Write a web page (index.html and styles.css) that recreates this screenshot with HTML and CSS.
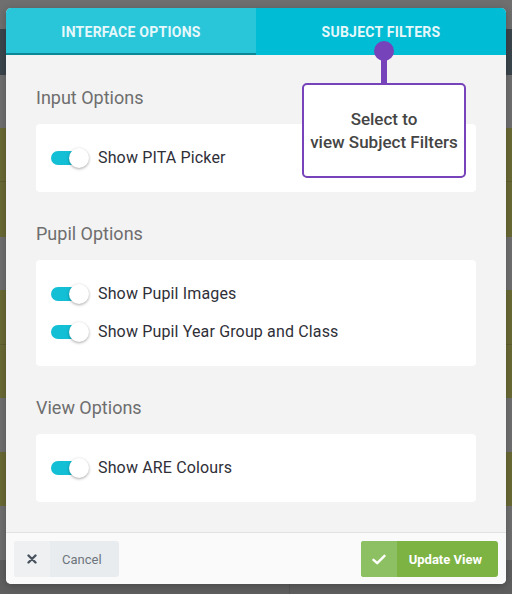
FILE: index.html
```html
<!DOCTYPE html>
<html>
<head>
<meta charset="utf-8">
<link rel="stylesheet" href="styles.css">
</head>
<body>
<div class="page">
  <div class="band b-gray" style="height:29px"></div>
  <div class="band b-slate" style="height:46px"></div>
  <div class="band b-gray" style="height:53px"></div>
  <div class="band b-olive line" style="height:54px"></div>
  <div class="band b-olive" style="height:55px"></div>
  <div class="band b-gray" style="height:53px"></div>
  <div class="band b-olive line" style="height:55px"></div>
  <div class="band b-olive" style="height:53px"></div>
  <div class="band b-gray" style="height:54px"></div>
  <div class="band b-olive" style="height:54px"></div>
  <div class="band b-gray" style="height:54px"></div>
  <div class="band b-dark"><span class="divider"></span></div>
</div>

<div class="modal">
  <div class="tabs">
    <div class="tab active">INTERFACE OPTIONS</div>
    <div class="tab">SUBJECT FILTERS</div>
  </div>
  <div class="body">
    <h3 class="heading">Input Options</h3>
    <div class="card">
      <div class="row"><span class="switch"><span class="track"></span><span class="thumb"></span></span>Show PITA Picker</div>
    </div>
    <h3 class="heading">Pupil Options</h3>
    <div class="card">
      <div class="row"><span class="switch"><span class="track"></span><span class="thumb"></span></span>Show Pupil Images</div>
      <div class="row"><span class="switch"><span class="track"></span><span class="thumb"></span></span>Show Pupil Year Group and Class</div>
    </div>
    <h3 class="heading">View Options</h3>
    <div class="card">
      <div class="row"><span class="switch"><span class="track"></span><span class="thumb"></span></span>Show ARE Colours</div>
    </div>
  </div>
  <div class="footer">
    <button class="btn cancel"><span class="ico"><svg width="10" height="10" viewBox="0 0 10 10"><path d="M1.5 1.5 L8.5 8.5 M8.5 1.5 L1.5 8.5" stroke="#4a5560" stroke-width="2.4" stroke-linecap="round"/></svg></span><span class="lbl">Cancel</span></button>
    <button class="btn update"><span class="ico"><svg width="14" height="11" viewBox="0 0 14 11"><path d="M1.5 5.8 L5.2 9.2 L12.5 1.8" fill="none" stroke="#fff" stroke-width="2.4" stroke-linecap="round" stroke-linejoin="round"/></svg></span><span class="lbl">Update View</span></button>
  </div>

  <div class="pin"></div>
  <div class="stem"></div>
  <div class="callout">Select to<br>view Subject Filters</div>
</div>
</body>
</html>
```

FILE: styles.css
```css
* { box-sizing: border-box; }
html, body { margin: 0; padding: 0; }
body {
  width: 512px;
  height: 594px;
  overflow: hidden;
  position: relative;
  font-family: Roboto, "Liberation Sans", sans-serif;
  background: #606060;
}
.page { display: flex; flex-direction: column; height: 594px; }
.band { width: 100%; flex: none; position: relative; }
.b-gray { background: #6f6f6f; }
.b-slate { background: #3b454c; }
.b-olive { background: #6a6a35; }
.b-dark { background: #5f5f5f; flex: 1; }
.line { border-bottom: 1px solid #5e5e30; }
.divider { position: absolute; left: 289px; top: 0; bottom: 0; width: 1px; background: #555; }

.modal {
  position: absolute;
  left: 6px;
  top: 8px;
  width: 500px;
  height: 576px;
  background: #f3f3f3;
  border-radius: 5px;
  overflow: hidden;
  display: flex;
  flex-direction: column;
  box-shadow: 0 2px 8px rgba(0,0,0,0.25);
}
.tabs { display: flex; height: 47px; flex: none; }
.tab {
  flex: 1;
  display: flex;
  align-items: center;
  justify-content: center;
  background: #00bcd4;
  color: #e6f8fb;
  font-size: 14px;
  font-weight: 700;
  letter-spacing: 0.25px;
  padding-top: 1px;
}
.tab.active { background: #29c6d9; border-bottom: 2px solid #0b8796; padding-top: 2px; }

.body { flex: 1; padding: 31px 30px 30px; display: flex; flex-direction: column; }
.heading {
  margin: 0 0 14px;
  font-size: 18px;
  font-weight: 400;
  line-height: 24px;
  color: #6e6e6e;
}
.card {
  background: #fff;
  border-radius: 4px;
  padding: 15px 15px;
  margin-bottom: 30px;
}
.card:last-child { margin-bottom: 0; }
.row {
  height: 38px;
  display: flex;
  align-items: center;
  font-size: 16px;
  letter-spacing: 0.15px;
  color: #2f2f38;
  padding-bottom: 1px;
}
.switch { position: relative; width: 38px; height: 20px; margin-right: 9px; flex: none; }
.track { position: absolute; left: 0; top: 3px; width: 34px; height: 14px; border-radius: 7px; background: #13bfd5; }
.thumb {
  position: absolute; left: 18px; top: 0; width: 20px; height: 20px; border-radius: 50%;
  background: #fff; box-shadow: 0 1px 3px rgba(0,0,0,0.35);
}

.footer {
  flex: none;
  height: 52px;
  border-top: 1px solid #e2e2e2;
  background: #fafafa;
  display: flex;
  justify-content: space-between;
  padding: 8px 8px 0;
}
.btn {
  height: 36px;
  border: 0;
  padding: 0;
  border-radius: 3px;
  display: flex;
  align-items: stretch;
  overflow: hidden;
  font-family: Roboto, "Liberation Sans", sans-serif;
  font-size: 13px;
  white-space: nowrap;
}
.btn .ico { width: 36px; display: flex; align-items: center; justify-content: center; flex: none; }
.btn .lbl { display: flex; align-items: center; padding: 0 17px 0 12px; }
.cancel { background: #e9ecef; color: #6c757d; }
.cancel .ico { background: #eef0f2; }
.update { background: #7cb342; color: #fff; font-weight: 700; font-size: 13px; }
.update .ico { background: #8dc062; }
.update .lbl { padding: 0 16px 0 12px; }

.pin {
  position: absolute; left: 368px; top: 33px; width: 20px; height: 20px;
  border-radius: 50%; background: #7643bb;
}
.stem { position: absolute; left: 375px; top: 43px; width: 6px; height: 33px; background: #7643bb; }
.callout {
  position: absolute;
  left: 296px;
  top: 75px;
  width: 164px;
  height: 95px;
  background: #fff;
  border: 2px solid #7643bb;
  border-radius: 5px;
  display: flex;
  align-items: center;
  justify-content: center;
  text-align: center;
  font-size: 17px;
  font-weight: 500;
  line-height: 23px;
  color: #454545;
}
```
